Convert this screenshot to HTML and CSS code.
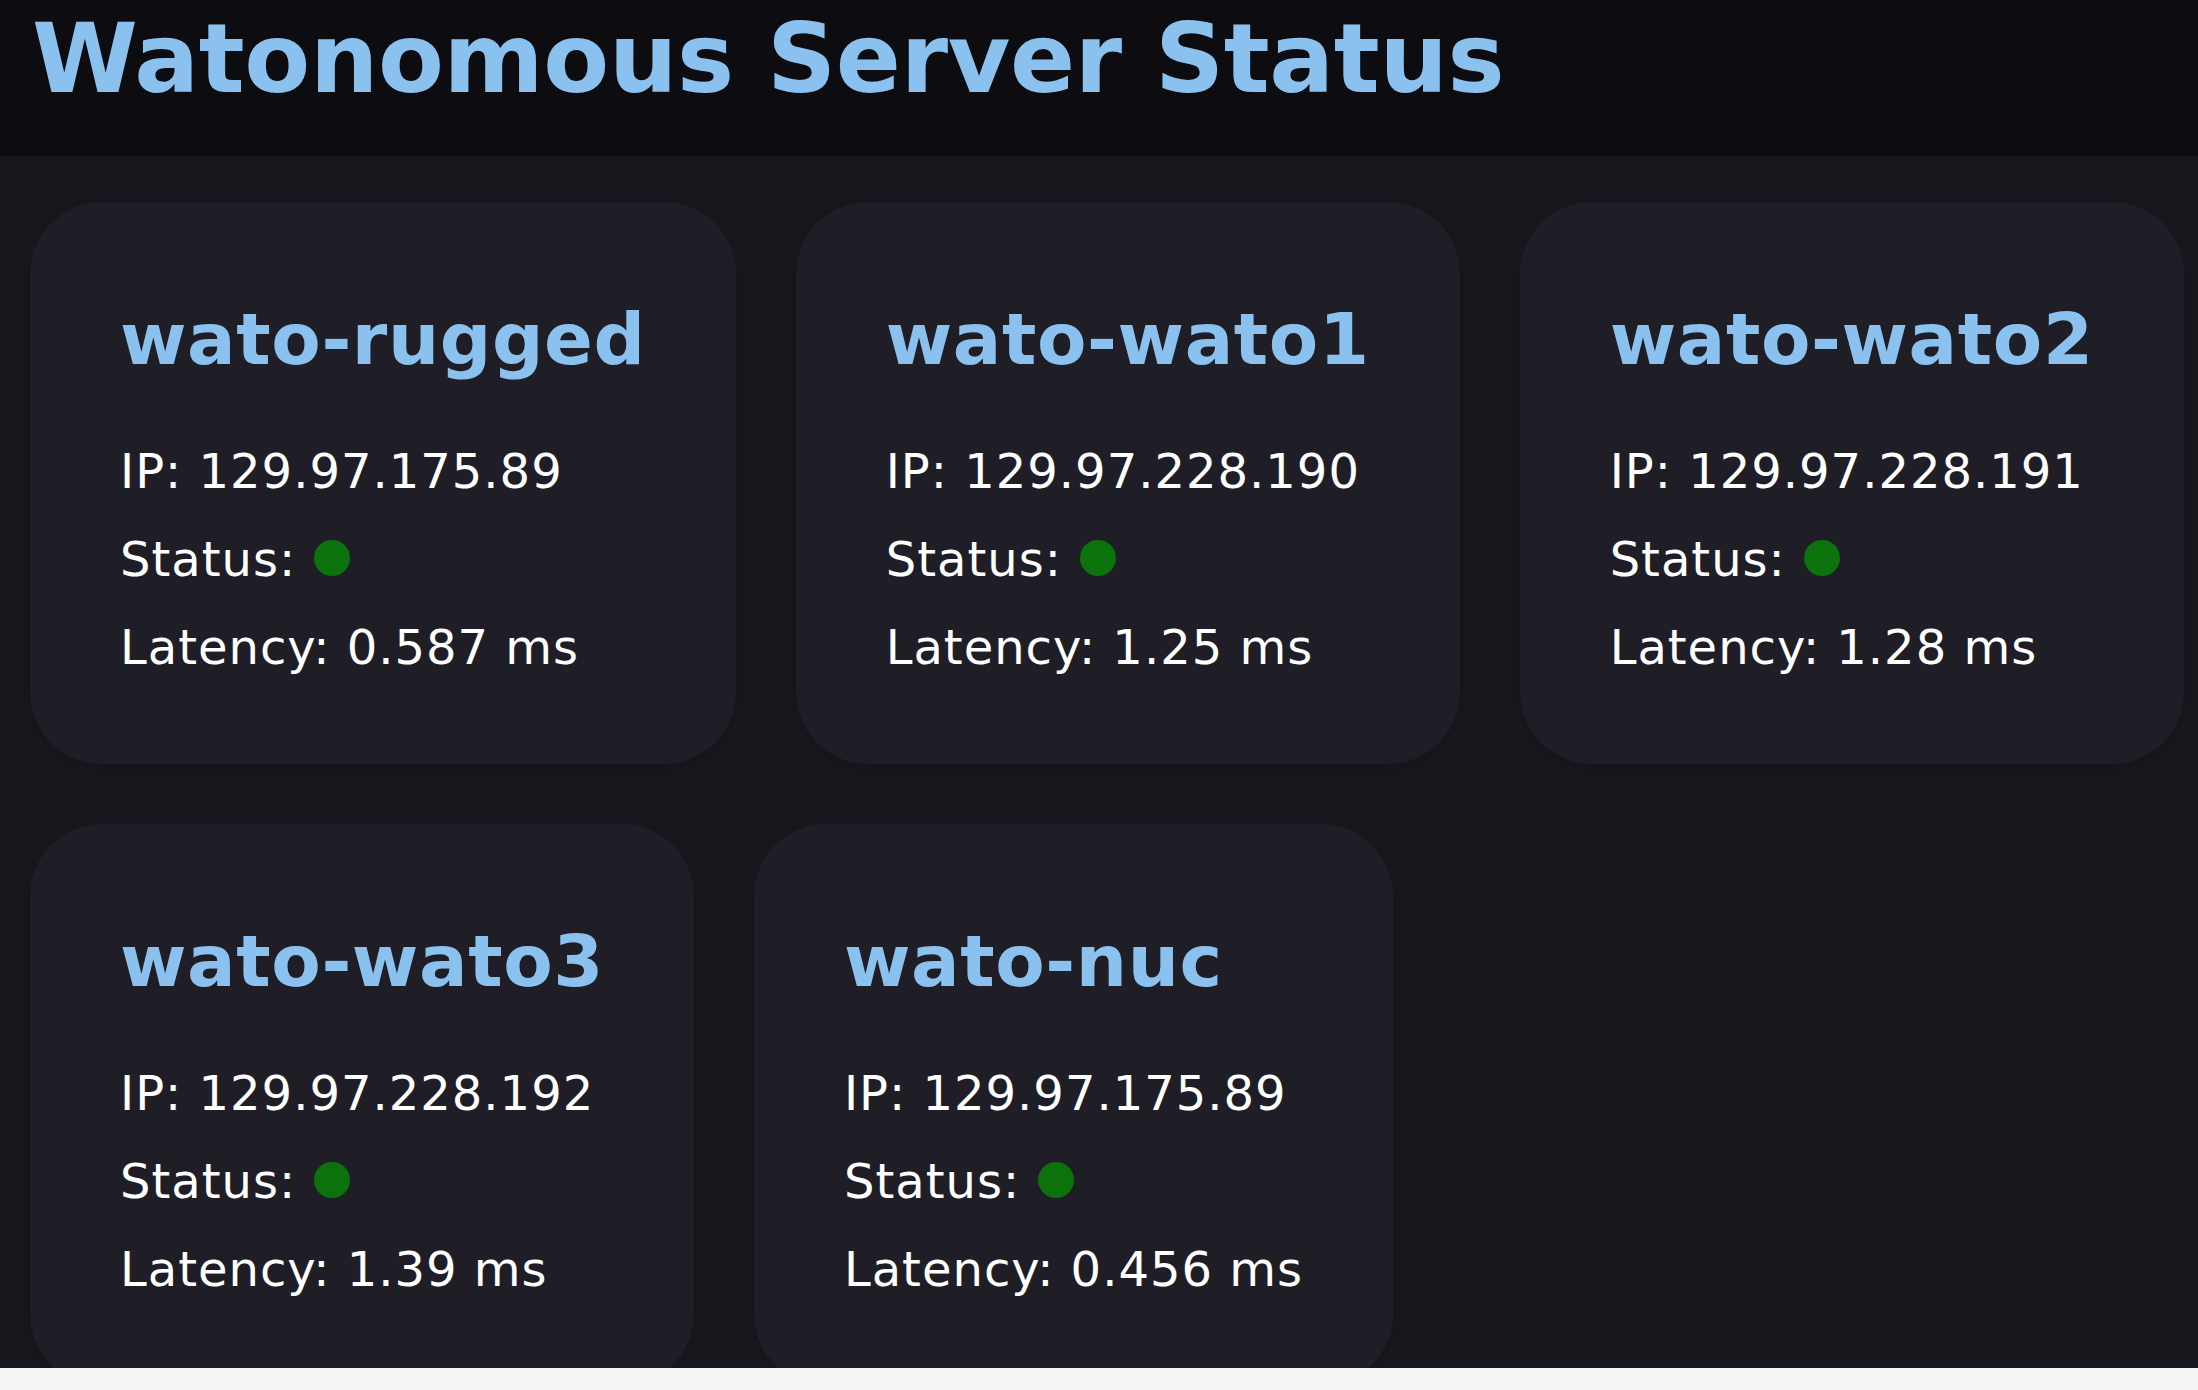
FILE: index.html
```html
<!DOCTYPE html>
<html lang="en">
<head>
<meta charset="utf-8">
<title>Watonomous Server Status</title>
<link rel="stylesheet" href="styles.css">
</head>
<body>
<header class="topbar">
  <h1 class="title">Watonomous Server Status</h1>
</header>
<main class="board">
  <section class="card">
    <h2 class="host">wato-rugged</h2>
    <div class="line">IP: 129.97.175.89</div>
    <div class="line">Status: <span class="dot"></span></div>
    <div class="line">Latency: 0.587 ms</div>
  </section>
  <section class="card">
    <h2 class="host">wato-wato1</h2>
    <div class="line">IP: 129.97.228.190</div>
    <div class="line">Status: <span class="dot"></span></div>
    <div class="line">Latency: 1.25 ms</div>
  </section>
  <section class="card">
    <h2 class="host">wato-wato2</h2>
    <div class="line">IP: 129.97.228.191</div>
    <div class="line">Status: <span class="dot"></span></div>
    <div class="line">Latency: 1.28 ms</div>
  </section>
  <section class="card">
    <h2 class="host">wato-wato3</h2>
    <div class="line">IP: 129.97.228.192</div>
    <div class="line">Status: <span class="dot"></span></div>
    <div class="line">Latency: 1.39 ms</div>
  </section>
  <section class="card">
    <h2 class="host">wato-nuc</h2>
    <div class="line">IP: 129.97.175.89</div>
    <div class="line">Status: <span class="dot"></span></div>
    <div class="line">Latency: 0.456 ms</div>
  </section>
</main>
</body>
</html>
```

FILE: styles.css
```css
html {
  background: #f4f4f4;
}
body {
  margin: 0;
  font-family: Verdana, "DejaVu Sans", sans-serif;
  color: #ffffff;
}
.topbar {
  background: #0d0d11;
  height: 156px;
  box-sizing: border-box;
  padding: 3px 32px 0;
}
.title {
  margin: 0;
  font-size: 96px;
  font-weight: bold;
  line-height: normal;
  letter-spacing: -0.3px;
  color: #8bc1ee;
}
.board {
  background: #18171d;
  height: 1212px;
  box-sizing: border-box;
  padding: 46px 0 0 30px;
  display: flex;
  flex-wrap: wrap;
  align-content: flex-start;
  gap: 60px;
}
.card {
  background: #1f1e27;
  border-radius: 72px;
  padding: 95px 90px 89px;
  display: flex;
  flex-direction: column;
  gap: 32px;
  box-shadow: 0 4px 16px rgba(0, 0, 0, 0.12);
}
.host {
  margin: 0 0 30px;
  font-size: 72px;
  font-weight: bold;
  line-height: normal;
  letter-spacing: 0.6px;
  color: #8bc1ee;
}
.line {
  font-size: 48px;
  line-height: 56px;
  letter-spacing: 1px;
  white-space: nowrap;
}
.dot {
  display: inline-block;
  width: 36px;
  height: 36px;
  border-radius: 50%;
  background: #0c720c;
  margin-left: 2px;
  vertical-align: baseline;
}
```
